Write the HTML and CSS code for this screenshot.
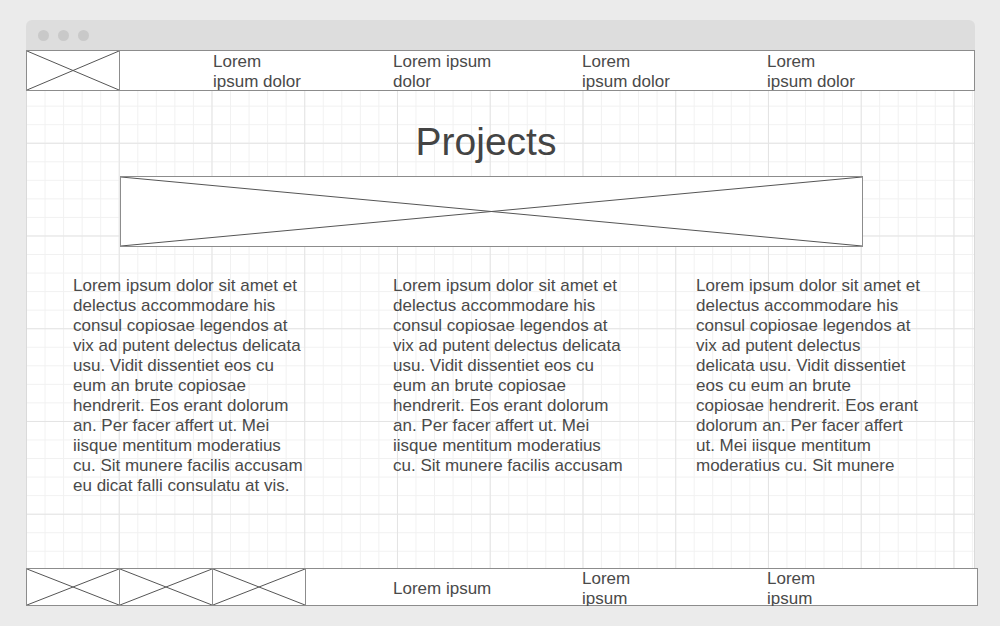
FILE: index.html
```html
<!DOCTYPE html>
<html lang="en">
<head>
    <meta charset="UTF-8">
    <meta name="viewport" content="width=device-width, initial-scale=1.0">
    <title>Projects</title>
    <link rel="stylesheet" href="styles.css">
</head>
<body>
    <div class="window">
        <div class="titlebar">
            <span class="dot"></span>
            <span class="dot"></span>
            <span class="dot"></span>
        </div>

        <div class="canvas">
            <header class="nav">
                <div class="placeholder logo">
                    <svg viewBox="0 0 100 100" preserveAspectRatio="none">
                        <line x1="0" y1="0" x2="100" y2="100"/>
                        <line x1="0" y1="100" x2="100" y2="0"/>
                    </svg>
                </div>
                <ul class="nav-links">
                    <li>Lorem<br>ipsum dolor</li>
                    <li>Lorem ipsum<br>dolor</li>
                    <li>Lorem<br>ipsum dolor</li>
                    <li>Lorem<br>ipsum dolor</li>
                </ul>
            </header>

            <main class="content">
                <h1 class="title">Projects</h1>
                <div class="placeholder hero">
                    <svg viewBox="0 0 100 100" preserveAspectRatio="none">
                        <line x1="0" y1="0" x2="100" y2="100"/>
                        <line x1="0" y1="100" x2="100" y2="0"/>
                    </svg>
                </div>

                <div class="columns">
                    <p class="col col-wide">Lorem ipsum dolor sit amet et delectus accommodare his consul copiosae legendos at vix ad putent delectus delicata usu. Vidit dissentiet eos cu eum an brute copiosae hendrerit. Eos erant dolorum an. Per facer affert ut. Mei iisque mentitum moderatius cu. Sit munere facilis accusam eu dicat falli consulatu at vis.</p>
                    <p class="col col-wide">Lorem ipsum dolor sit amet et delectus accommodare his consul copiosae legendos at vix ad putent delectus delicata usu. Vidit dissentiet eos cu eum an brute copiosae hendrerit. Eos erant dolorum an. Per facer affert ut. Mei iisque mentitum moderatius cu. Sit munere facilis accusam</p>
                    <p class="col col-narrow">Lorem ipsum dolor sit amet et delectus accommodare his consul copiosae legendos at vix ad putent delectus delicata usu. Vidit dissentiet eos cu eum an brute copiosae hendrerit. Eos erant dolorum an. Per facer affert ut. Mei iisque mentitum moderatius cu. Sit munere</p>
                </div>
            </main>

            <footer class="footer">
                <div class="thumbs">
                    <div class="placeholder thumb">
                        <svg viewBox="0 0 100 100" preserveAspectRatio="none">
                            <line x1="0" y1="0" x2="100" y2="100"/>
                            <line x1="0" y1="100" x2="100" y2="0"/>
                        </svg>
                    </div>
                    <div class="placeholder thumb">
                        <svg viewBox="0 0 100 100" preserveAspectRatio="none">
                            <line x1="0" y1="0" x2="100" y2="100"/>
                            <line x1="0" y1="100" x2="100" y2="0"/>
                        </svg>
                    </div>
                    <div class="placeholder thumb">
                        <svg viewBox="0 0 100 100" preserveAspectRatio="none">
                            <line x1="0" y1="0" x2="100" y2="100"/>
                            <line x1="0" y1="100" x2="100" y2="0"/>
                        </svg>
                    </div>
                </div>
                <ul class="footer-links">
                    <li class="single">Lorem ipsum</li>
                    <li>Lorem<br>ipsum</li>
                    <li>Lorem<br>ipsum</li>
                </ul>
            </footer>
        </div>
    </div>
</body>
</html>
```

FILE: styles.css
```css
* {
    margin: 0;
    padding: 0;
    box-sizing: border-box;
}

body {
    background-color: #ebebeb;
    font-family: 'Liberation Sans', Arial, sans-serif;
    font-size: 17px;
    line-height: 20px;
    color: #4a4a4a;
}

.window {
    width: 949px;
    margin: 20px 0 0 26px;
}

.titlebar {
    height: 30px;
    display: flex;
    align-items: center;
    gap: 9px;
    padding-left: 12px;
    background-color: #dddddd;
    border-radius: 6px 6px 0 0;
}

.dot {
    width: 11px;
    height: 11px;
    border-radius: 50%;
    background-color: #c9c9c9;
}

/* drawing canvas with the wireframe grid */
.canvas {
    height: 556px;
    display: flex;
    flex-direction: column;
    background-color: #ffffff;
    background-image:
        linear-gradient(to right, #e4e4e4 1px, transparent 1px),
        linear-gradient(to bottom, #e4e4e4 1px, transparent 1px),
        linear-gradient(to right, #f1f1f1 1px, transparent 1px),
        linear-gradient(to bottom, #f1f1f1 1px, transparent 1px);
    background-size: 92.75px 92.75px, 92.75px 92.75px, 18.55px 18.55px, 18.55px 18.55px;
    box-shadow: inset 1px 0 #dadada, inset -1px 0 #dadada;
}

ul {
    list-style: none;
}

.placeholder svg {
    display: block;
    width: 100%;
    height: 100%;
}

.placeholder line {
    stroke: #555555;
    stroke-width: 1;
    vector-effect: non-scaling-stroke;
}

.nav {
    height: 41px;
    display: flex;
    background-color: #ffffff;
    border: 1px solid #8c8c8c;
}

.logo {
    width: 93px;
    border-right: 1px solid #8c8c8c;
}

.nav-links {
    display: grid;
    grid-template-columns: 180px 189px 185px auto;
    padding: 1px 0 0 93px;
}

.content {
    padding-top: 29px;
}

.title {
    width: 742px;
    margin-left: 94px;
    padding-right: 10px;
    text-align: center;
    font-size: 39px;
    line-height: 44px;
    font-weight: normal;
    color: #444444;
}

.hero {
    width: 743px;
    height: 71px;
    margin: 12px 0 0 94px;
    background-color: #ffffff;
    border: 1px solid #8c8c8c;
}

.columns {
    display: grid;
    grid-template-columns: 320px 303px 226px;
    padding: 29px 0 0 47px;
}

.col-wide {
    width: 232px;
}

.col-narrow {
    width: 226px;
}

.footer {
    width: 952px;
    height: 38px;
    margin-top: auto;
    display: flex;
    background-color: #ffffff;
    border: 1px solid #8c8c8c;
}

.thumbs {
    display: flex;
}

.thumb {
    width: 93px;
    border-right: 1px solid #8c8c8c;
}

.footer-links {
    display: grid;
    grid-template-columns: 189px 185px auto;
    padding-left: 87px;
}

.footer-links .single {
    align-self: center;
}
```
